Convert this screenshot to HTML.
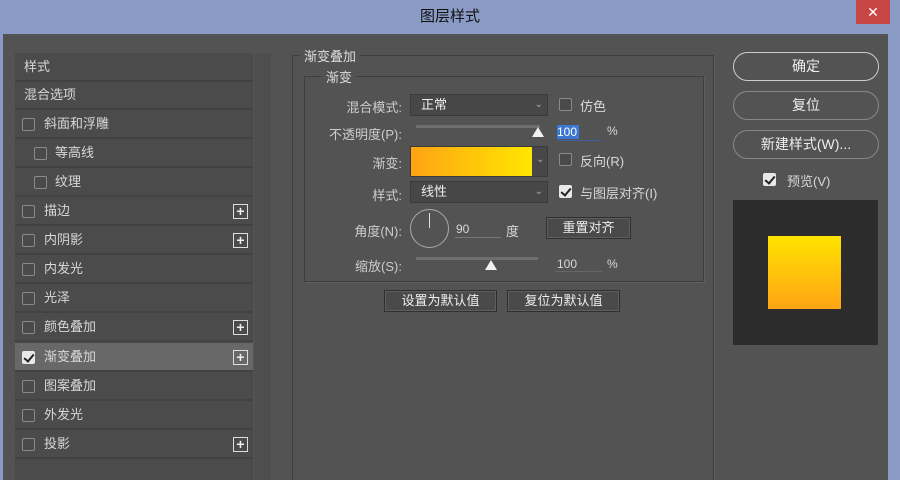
<!DOCTYPE html>
<html style="overflow:hidden;width:900px;height:480px"><head><meta charset="utf-8"><style>
*{margin:0;padding:0;box-sizing:border-box}
body{width:900px;height:480px;overflow:hidden;background:#8a9bc6;font-family:"Liberation Sans","Noto Sans CJK SC",sans-serif;font-size:13px;color:#d8d8d8;position:relative}
.abs{position:absolute}
.title{left:0;top:0;width:900px;height:34px;text-align:center;line-height:34px;font-size:15px;color:#111}
.close{left:856px;top:0;width:34px;height:24px;background:#c84545;color:#fff;text-align:center;line-height:24px;font-size:14px}
.dlg{left:3px;top:34px;width:885px;height:446px;background:#535353}
.list{left:15px;top:53px;width:238px;height:427px;background:#4b4b4b}
.row{position:absolute;left:15px;width:238px;height:29px;border-bottom:2px solid #424242;line-height:28px;padding-left:9px}
.row.sel{background:#686868}
.cb{position:absolute;width:13px;height:13px;border:1px solid #8a8a8a;border-radius:2px;background:#4a4a4a}
.cb.on{background:#e8e8e8;border-color:#e8e8e8}
.cb.on::after{content:"";position:absolute;left:3px;top:0px;width:4px;height:8px;border:solid #222;border-width:0 2px 2px 0;transform:rotate(40deg)}
.plus{position:absolute;left:218px;top:7px;width:15px;height:15px;border:1px solid #ddd;color:#eee;font-size:14px;line-height:12px;text-align:center;font-weight:bold}
.scroll{left:255px;top:53px;width:16px;height:427px;background:#4e4e4e}
.grp{border:1px solid #3e3e3e;box-shadow:1px 1px 0 #606060}
.lbl{font-size:13px;color:#ccc;text-align:right}
.sel-box{background:#474747;border:1px solid #3a3a3a;height:22px;line-height:20px;padding-left:10px;color:#eee}
.arrow{position:absolute;right:4px;top:0;color:#aaa;font-size:10px}
.btn{border:1px solid #2f2f2f;background:#4a4a4a;box-shadow:inset 0 0 0 1px #5e5e5e;text-align:center;color:#eee;height:22px;line-height:20px}
.rbtn{left:733px;width:146px;height:29px;border:1px solid #888;border-radius:15px;text-align:center;line-height:27px;color:#eee;font-size:14px}
</style></head><body>
<div class="abs title">图层样式</div>
<div class="abs close">✕</div>
<div class="abs dlg"></div>
<div class="abs list"></div>
<div class="abs scroll"></div>
<div class="row" style="top:53px">样式</div>
<div class="row" style="top:81px">混合选项</div>
<div class="row" style="top:110px"><span class="cb" style="left:7px;top:8px"></span><span style="margin-left:20px">斜面和浮雕</span></div>
<div class="row" style="top:139px"><span class="cb" style="left:19px;top:8px"></span><span style="margin-left:31px">等高线</span></div>
<div class="row" style="top:168px"><span class="cb" style="left:19px;top:8px"></span><span style="margin-left:31px">纹理</span></div>
<div class="row" style="top:197px"><span class="cb" style="left:7px;top:8px"></span><span style="margin-left:20px">描边</span><span class="plus">+</span></div>
<div class="row" style="top:226px"><span class="cb" style="left:7px;top:8px"></span><span style="margin-left:20px">内阴影</span><span class="plus">+</span></div>
<div class="row" style="top:255px"><span class="cb" style="left:7px;top:8px"></span><span style="margin-left:20px">内发光</span></div>
<div class="row" style="top:284px"><span class="cb" style="left:7px;top:8px"></span><span style="margin-left:20px">光泽</span></div>
<div class="row" style="top:313px"><span class="cb" style="left:7px;top:8px"></span><span style="margin-left:20px">颜色叠加</span><span class="plus">+</span></div>
<div class="row sel" style="top:343px"><span class="cb on" style="left:7px;top:8px"></span><span style="margin-left:20px">渐变叠加</span><span class="plus">+</span></div>
<div class="row" style="top:372px"><span class="cb" style="left:7px;top:8px"></span><span style="margin-left:20px">图案叠加</span></div>
<div class="row" style="top:401px"><span class="cb" style="left:7px;top:8px"></span><span style="margin-left:20px">外发光</span></div>
<div class="row" style="top:430px"><span class="cb" style="left:7px;top:8px"></span><span style="margin-left:20px">投影</span><span class="plus">+</span></div>

<div class="abs grp" style="left:292px;top:55px;width:422px;height:430px"></div>
<div class="abs" style="left:300px;top:46px;padding:0 4px;background:#535353;color:#ddd">渐变叠加</div>
<div class="abs grp" style="left:304px;top:76px;width:400px;height:206px"></div>
<div class="abs" style="left:322px;top:67px;padding:0 4px;background:#535353;color:#ddd">渐变</div>

<div class="abs lbl" style="left:310px;top:97px;width:92px">混合模式:</div>
<div class="abs sel-box" style="left:410px;top:94px;width:138px">正常<span class="arrow">⌄</span></div>
<span class="cb abs" style="left:559px;top:98px"></span><div class="abs" style="left:580px;top:96px">仿色</div>

<div class="abs lbl" style="left:310px;top:124px;width:92px">不透明度(P):</div>
<div class="abs" style="left:416px;top:125px;width:124px;height:3px;background:#6e6e6e"></div>
<div class="abs" style="left:532px;top:127px;width:0;height:0;border-left:6px solid transparent;border-right:6px solid transparent;border-bottom:10px solid #f0f0f0"></div>
<div class="abs" style="left:557px;top:125px;width:22px;height:14px;background:#3a78d4;color:#fff;font-size:12px;line-height:14px">100</div>
<div class="abs" style="left:557px;top:140px;width:45px;height:1px;background:#4060a0"></div>
<div class="abs" style="left:607px;top:124px;font-size:12px">%</div>

<div class="abs lbl" style="left:310px;top:153px;width:92px">渐变:</div>
<div class="abs" style="left:410px;top:146px;width:138px;height:31px;background:#474747;border:1px solid #3a3a3a"></div>
<div class="abs" style="left:411px;top:147px;width:121px;height:29px;background:linear-gradient(90deg,#ffa414,#ffe600)"></div>
<div class="abs" style="left:536px;top:154px;color:#aaa;font-size:10px">⌄</div>
<span class="cb abs" style="left:559px;top:153px"></span><div class="abs" style="left:580px;top:151px">反向(R)</div>

<div class="abs lbl" style="left:310px;top:185px;width:92px">样式:</div>
<div class="abs sel-box" style="left:410px;top:181px;width:138px">线性<span class="arrow">⌄</span></div>
<span class="cb on abs" style="left:559px;top:185px"></span><div class="abs" style="left:580px;top:183px">与图层对齐(I)</div>

<div class="abs lbl" style="left:310px;top:221px;width:92px">角度(N):</div>
<div class="abs" style="left:410px;top:209px;width:39px;height:39px;border:1px solid #aaa;border-radius:50%"></div>
<div class="abs" style="left:429px;top:213px;width:1px;height:15px;background:#ddd"></div>
<div class="abs" style="left:456px;top:222px;font-size:12px">90</div>
<div class="abs" style="left:455px;top:237px;width:46px;height:1px;background:#777"></div>
<div class="abs" style="left:506px;top:221px">度</div>
<div class="abs btn" style="left:546px;top:217px;width:85px">重置对齐</div>

<div class="abs lbl" style="left:310px;top:256px;width:92px">缩放(S):</div>
<div class="abs" style="left:416px;top:257px;width:122px;height:3px;background:#6e6e6e"></div>
<div class="abs" style="left:485px;top:260px;width:0;height:0;border-left:6px solid transparent;border-right:6px solid transparent;border-bottom:10px solid #f0f0f0"></div>
<div class="abs" style="left:557px;top:257px;font-size:12px">100</div>
<div class="abs" style="left:555px;top:271px;width:47px;height:1px;background:#666"></div>
<div class="abs" style="left:607px;top:257px;font-size:12px">%</div>

<div class="abs btn" style="left:384px;top:290px;width:113px">设置为默认值</div>
<div class="abs btn" style="left:507px;top:290px;width:113px">复位为默认值</div>

<div class="abs rbtn" style="left:733px;top:52px;border-color:#ccc">确定</div>
<div class="abs rbtn" style="top:91px">复位</div>
<div class="abs rbtn" style="top:130px">新建样式(W)...</div>
<span class="cb on abs" style="left:763px;top:173px"></span><div class="abs" style="left:787px;top:171px">预览(V)</div>
<div class="abs" style="left:733px;top:200px;width:145px;height:145px;background:#2c2c2c"></div>
<div class="abs" style="left:768px;top:236px;width:73px;height:73px;background:linear-gradient(180deg,#ffe300,#ffa414)"></div>
</body></html>
